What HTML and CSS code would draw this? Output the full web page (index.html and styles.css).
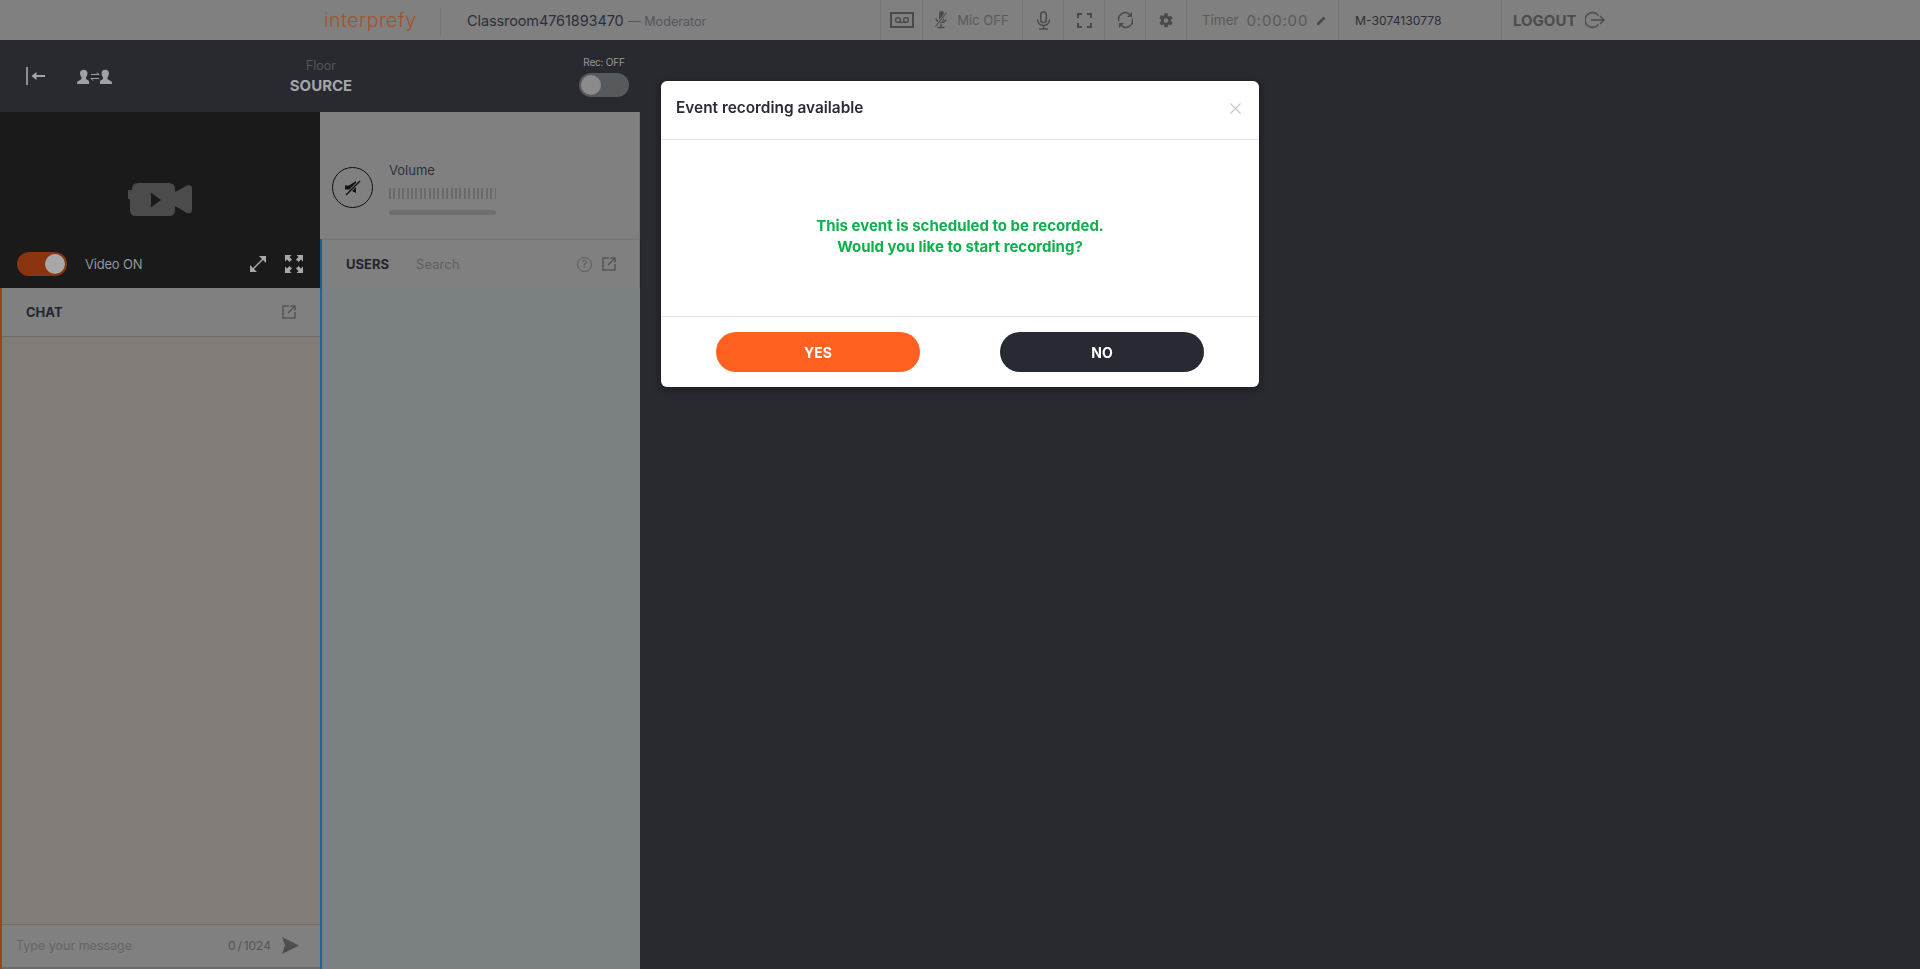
FILE: index.html
```html
<!DOCTYPE html>
<html lang="en">
<head>
    <meta charset="UTF-8">
    <meta name="viewport" content="width=device-width, initial-scale=1.0">
    <title>Interprefy</title>
    <link rel="stylesheet" href="styles.css">
</head>
<body>
    <header class="topbar">
        <div class="logo">interprefy</div>
        <div class="room"><span class="room-name">Classroom4761893470</span> <span class="room-role">— Moderator</span></div>
        <div class="cell cell-tape">
            <svg width="24" height="16" viewBox="0 0 24 16"><rect x="1" y="1" width="22" height="14" fill="none" stroke="#4a4a4a" stroke-width="2"/><circle cx="8" cy="8" r="2.4" fill="none" stroke="#4a4a4a" stroke-width="1.4"/><circle cx="16" cy="8" r="2.4" fill="none" stroke="#4a4a4a" stroke-width="1.4"/><path d="M8 10.4h8" stroke="#4a4a4a" stroke-width="1.4"/></svg>
        </div>
        <div class="cell cell-micoff">
            <svg width="14" height="18" viewBox="0 0 14 18"><path d="M5 2.5a2.5 2.5 0 0 1 5 0v5a2.5 2.5 0 0 1-5 0z" fill="#4a4a4a"/><path d="M2 7.5a5.300 5.300 0 0 0 10 1M7 13v3M3.500 16.500h7" fill="none" stroke="#4a4a4a" stroke-width="1.4"/><path d="M12.500 1.500 1.500 15.500" stroke="#808080" stroke-width="2.600"/><path d="M12.500 1.500 1.500 15.500" stroke="#4a4a4a" stroke-width="1.100"/></svg>
            <span class="mic-label">Mic OFF</span>
        </div>
        <div class="cell cell-icon">
            <svg width="15" height="19" viewBox="0 0 15 19"><rect x="4.700" y="1" width="5.600" height="10.500" rx="2.800" fill="none" stroke="#4a4a4a" stroke-width="1.500"/><path d="M1.500 8.500a6 6 0 0 0 12 0M7.500 14.500v3M3 18h9" fill="none" stroke="#4a4a4a" stroke-width="1.500"/></svg>
        </div>
        <div class="cell cell-icon">
            <svg width="15" height="15" viewBox="0 0 15 15"><path d="M1 5V1h4M10 1h4v4M14 10v4h-4M5 14H1v-4" fill="none" stroke="#4a4a4a" stroke-width="2"/></svg>
        </div>
        <div class="cell cell-icon">
            <svg width="17" height="18" viewBox="0 0 17 18"><path d="M2 10.500A6.500 6.500 0 0 1 13 4l1.500 1.500M15 7.500A6.500 6.500 0 0 1 4 14l-1.500-1.500" fill="none" stroke="#4a4a4a" stroke-width="1.400"/><path d="M15 1v5h-5zM2 17v-5h5z" fill="#4a4a4a"/></svg>
        </div>
        <div class="cell cell-icon">
            <svg width="16" height="17" viewBox="0 0 24 24"><path fill="#4a4a4a" d="M19.400 13a7.500 7.500 0 0 0 0-2l2.500-1.900-2.400-4.200-3 1.200a7.500 7.500 0 0 0-1.700-1L14.400 1h-4.800l-.4 3.100a7.500 7.500 0 0 0-1.700 1l-3-1.200-2.400 4.200L4.600 11a7.500 7.500 0 0 0 0 2l-2.500 1.900 2.400 4.200 3-1.200a7.500 7.500 0 0 0 1.700 1l.4 3.100h4.800l.4-3.100a7.500 7.500 0 0 0 1.700-1l3 1.200 2.400-4.200zM12 15.500a3.500 3.500 0 1 1 0-7 3.500 3.500 0 0 1 0 7z"/></svg>
        </div>
        <div class="cell cell-timer">
            <span class="timer-label">Timer</span>
            <span class="timer-value">0:00:00</span>
            <svg width="11" height="11" viewBox="0 0 11 11"><path d="M1 10V8l6.500-6.500 2 2L3 10z" fill="#4a4a4a"/></svg>
        </div>
        <div class="cell cell-code">M-3074130778</div>
        <div class="cell cell-logout">
            <span class="logout-label">LOGOUT</span>
            <svg width="20" height="18" viewBox="0 0 20 18"><path d="M13.500 4.500A7.500 7.500 0 1 0 13.500 13.500" fill="none" stroke="#4a4a4a" stroke-width="1.400"/><path d="M6 9h13M15 5l4 4-4 4" fill="none" stroke="#4a4a4a" stroke-width="1.400"/></svg>
        </div>
    </header>

    <main class="workspace">
        <section class="side">
            <div class="floorbar">
                <div class="floor-left">
                    <svg width="20" height="18" viewBox="0 0 20 18"><path d="M1 0v18" stroke="#8f8f8f" stroke-width="2"/><path d="M7 9h12" stroke="#a5a5a5" stroke-width="2"/><path d="M10.500 5 5.500 9l5 4z" fill="#a5a5a5"/></svg>
                    <svg width="35" height="15" viewBox="0 0 35 15"><path fill="#a0a0a0" d="M3 4a3.800 3.800 0 0 1 7.500 0c0 2-1 3.500-1.500 4.500v1.500l3 2v3H0v-2l4.500-3V8.500C4 7.500 3 6 3 4zM24.500 4a3.800 3.800 0 0 1 7.500 0c0 2-1 3.500-1.500 4.500v1.500l4.500 3v2H23v-3l3-2V8.500C25.500 7.500 24.500 6 24.500 4z"/><path d="M14 5.500h8M20 3.500l2 2M22 9.500h-8M16 11.500l-2-2" stroke="#a0a0a0" stroke-width="1" fill="none"/></svg>
                </div>
                <div class="floor-title">
                    <div class="floor-label">Floor</div>
                    <div class="floor-source">SOURCE</div>
                </div>
                <div class="rec">
                    <div class="rec-label">Rec: OFF</div>
                    <div class="switch switch-off"><span class="knob"></span></div>
                </div>
            </div>
            <div class="columns">
                <div class="col">
                    <div class="video">
                        <div class="video-stage">
                            <svg width="66" height="33" viewBox="0 0 66 33"><path fill="#4b4b4b" d="M5 6q0-6 6-6h31q6 0 6 6v3l12-6.500q5-1 5 3V27q0 4-5 3l-12-7v4q0 6-6 6H9q-6 0-6-6V16H1V7h4z"/><path fill="#1a1a1a" d="M24 9.500v15l10-7.500z"/></svg>
                        </div>
                        <div class="video-controls">
                            <div class="switch switch-on"><span class="knob"></span></div>
                            <span class="video-label">Video ON</span>
                            <div class="video-icons">
                                <svg width="18" height="18" viewBox="0 0 18 18"><path d="M4 14 14 4" stroke="#a8a8a8" stroke-width="1.500"/><path d="M10 1h7v7zM1 10v7h7z" fill="#a8a8a8"/></svg>
                                <svg width="18" height="18" viewBox="0 0 18 18"><path fill="#a8a8a8" d="M0 0h6.500L4.500 2 7 4.500 4.500 7 2 4.500 0 6.500zM18 0v6.500l-2-2L13.500 7 11 4.500 13.500 2l-2-2zM0 18v-6.500l2 2L4.500 11 7 13.500 4.500 16l2 2zM18 18h-6.500l2-2-2.500-2.500 2.500-2.500 2.500 2.500 2-2z"/></svg>
                            </div>
                        </div>
                    </div>
                    <div class="chat">
                        <div class="panel-head chat-head">
                            <span class="panel-title">CHAT</span>
                            <svg class="ext-icon" width="14" height="14" viewBox="0 0 14 14"><path d="M7 1H1v12h12V7M6 8l7-7M8.500 1H13v4.500" fill="none" stroke="#555" stroke-width="1.500"/></svg>
                        </div>
                        <div class="chat-log"></div>
                        <div class="chat-input">
                            <span class="chat-placeholder">Type your message</span>
                            <span class="chat-count">0 / 1024</span>
                            <svg width="17" height="17" viewBox="0 0 17 17"><path d="M0 0l17 8.500L0 17l3-8.500z" fill="#4e4e4e"/></svg>
                        </div>
                    </div>
                </div>
                <div class="col">
                    <div class="volume">
                        <div class="mute">
                            <svg width="18" height="18" viewBox="0 0 18 18"><path d="M1 6.500h4L12 2v12L5 10.500H1z" fill="#111"/><path d="M16 2 2 16" stroke="#808080" stroke-width="3"/><path d="M16 2 2 16" stroke="#111" stroke-width="1.500"/></svg>
                        </div>
                        <div class="volume-info">
                            <div class="volume-label">Volume</div>
                            <div class="volume-ticks"></div>
                            <div class="volume-bar"></div>
                        </div>
                    </div>
                    <div class="users">
                        <div class="panel-head users-head">
                            <span class="panel-title">USERS</span>
                            <span class="users-search">Search</span>
                            <span class="help">?</span>
                            <svg class="ext-icon" width="14" height="14" viewBox="0 0 14 14"><path d="M7 1H1v12h12V7M6 8l7-7M8.500 1H13v4.500" fill="none" stroke="#555" stroke-width="1.500"/></svg>
                        </div>
                        <div class="users-list"></div>
                    </div>
                </div>
            </div>
        </section>
    </main>

    <div class="modal-layer">
        <div class="modal">
            <div class="modal-head">
                <span class="modal-title">Event recording available</span>
                <svg class="modal-close" width="11" height="11" viewBox="0 0 11 11"><path d="M.5.500l10 10M10.500.500l-10 10" stroke="#c6c6c6" stroke-width="1.100"/></svg>
            </div>
            <div class="modal-body">
                <p>This event is scheduled to be recorded.</p>
                <p>Would you like to start recording?</p>
            </div>
            <div class="modal-foot">
                <button class="btn btn-yes">YES</button>
                <button class="btn btn-no">NO</button>
            </div>
        </div>
    </div>
</body>
</html>
```

FILE: styles.css
```css
* {
    box-sizing: border-box;
}
html, body {
    height: 100%;
}
body {
    margin: 0;
    display: flex;
    flex-direction: column;
    height: 969px;
    overflow: hidden;
    background: #292a30;
    font-family: "Inter", "Liberation Sans", sans-serif;
    color: #2c2e3a;
}

/* top bar */
.topbar {
    height: 40px;
    flex: none;
    display: flex;
    align-items: stretch;
    background: #808080;
    padding-left: 324px;
}
.logo {
    width: 117px;
    border-right: 1px solid #757575;
    margin: 8px 0 4px;
    color: #a5532c;
    font-size: 19.500px;
    font-weight: 300;
    line-height: 24px;
    letter-spacing: 0.5px;
}
.room {
    width: 439px;
    padding-left: 26px;
    line-height: 40px;
    white-space: nowrap;
}
.room-name {
    font-size: 14.500px;
    letter-spacing: -0.1px;
    color: #2c2e3a;
}
.room-role {
    font-size: 12.600px;
    color: #55565f;
}
.cell {
    display: flex;
    align-items: center;
    justify-content: center;
    border-left: 1px solid #757575;
    white-space: nowrap;
}
.cell-tape {
    width: 42px;
}
.cell-micoff {
    width: 100px;
    gap: 9px;
    padding-right: 2px;
    color: #5a5a5a;
}
.mic-label {
    font-size: 13px;
}
.cell-icon {
    width: 41px;
}
.cell-timer {
    width: 152px;
    gap: 8px;
    padding-left: 4px;
    color: #5a5a5a;
}
.timer-label {
    font-size: 13.500px;
}
.timer-value {
    font-size: 15px;
    letter-spacing: 0.8px;
}
.cell-code {
    width: 163px;
    justify-content: flex-start;
    padding-left: 16px;
    font-size: 12.200px;
    color: #2c2e3a;
}
.cell-logout {
    width: 128px;
    justify-content: flex-start;
    padding-left: 11px;
    gap: 9px;
}
.logout-label {
    font-size: 15px;
    font-weight: 700;
    color: #4c4c4c;
}

/* main area */
.workspace {
    flex: 1;
    min-height: 0;
    display: flex;
}
.side {
    width: 640px;
    display: flex;
    flex-direction: column;
}
.floorbar {
    height: 72px;
    flex: none;
    display: flex;
    align-items: center;
    padding: 0 11px 0 26px;
    background: #292a30;
}
.floor-left {
    width: 203px;
    display: flex;
    align-items: center;
    gap: 31px;
}
.floor-title {
    width: 184px;
    padding-top: 2px;
    text-align: center;
}
.floor-label {
    font-size: 12.500px;
    line-height: 15px;
    color: #55565c;
}
.floor-source {
    margin-top: 2px;
    font-size: 15px;
    line-height: 22px;
    font-weight: 700;
    color: #a3a6aa;
}
.rec {
    margin-left: auto;
    display: flex;
    flex-direction: column;
    align-items: center;
    gap: 4px;
}
.rec-label {
    font-size: 10px;
    line-height: 13px;
    color: #9a9a9a;
    letter-spacing: -0.2px;
}
.switch {
    width: 50px;
    height: 24px;
    border-radius: 12px;
    display: flex;
    align-items: center;
    padding: 0 2px;
}
.knob {
    width: 20px;
    height: 20px;
    border-radius: 50%;
}
.switch-off {
    background: #565a5d;
}
.switch-off .knob {
    background: #8b8b8b;
}
.switch-on {
    background: #8a3510;
    justify-content: flex-end;
}
.switch-on .knob {
    background: #a8a8a8;
}
.columns {
    flex: 1;
    min-height: 0;
    display: grid;
    grid-template-columns: 320px 320px;
}
.col {
    display: flex;
    flex-direction: column;
    min-height: 0;
}

/* video */
.video {
    height: 176px;
    flex: none;
    background: #1a1a1a;
    display: flex;
    flex-direction: column;
}
.video-stage {
    flex: 1;
    display: flex;
    align-items: flex-start;
    justify-content: center;
    padding-top: 71px;
}
.video-controls {
    height: 48px;
    flex: none;
    display: flex;
    align-items: center;
    padding: 0 17px;
}
.video-label {
    margin-left: 18px;
    font-size: 13px;
    letter-spacing: -0.2px;
    color: #92979c;
}
.video-icons {
    margin-left: auto;
    display: flex;
    gap: 18px;
}

/* chat */
.chat {
    flex: 1;
    min-height: 0;
    display: flex;
    flex-direction: column;
    border-left: 2px solid #a0421a;
    background: #808080;
}
.panel-head {
    flex: none;
    display: flex;
    align-items: center;
}
.panel-title {
    font-size: 13px;
    font-weight: 700;
    color: #23252f;
}
.chat-head {
    height: 49px;
    padding: 0 24px;
    justify-content: space-between;
    border-bottom: 1px solid #6c6c6c;
}
.chat-log {
    flex: 1;
    background: #827c78;
}
.chat-input {
    height: 45px;
    flex: none;
    display: flex;
    align-items: center;
    padding: 0 21px 2px 14px;
    border-top: 1px solid #6f6f6f;
    border-bottom: 2px solid #6c6c6c;
}
.chat-placeholder {
    font-size: 12.500px;
    color: #656565;
}
.chat-count {
    margin-left: auto;
    margin-right: 11px;
    font-size: 12px;
    word-spacing: -1.500px;
    color: #555;
}

/* volume + users */
.volume {
    height: 127px;
    flex: none;
    background: #808080;
    display: flex;
    align-items: flex-start;
    padding: 55px 0 0 12px;
    border-right: 1px solid #747474;
}
.mute {
    width: 41px;
    height: 41px;
    border: 1.500px solid #111;
    border-radius: 50%;
    display: flex;
    align-items: center;
    justify-content: center;
}
.volume-info {
    margin-left: 16px;
    margin-top: -5px;
}
.volume-label {
    font-size: 13px;
    line-height: 16px;
    color: #2e3044;
}
.volume-ticks {
    width: 107px;
    height: 11px;
    margin-top: 10px;
    background: repeating-linear-gradient(90deg, #6a6a6a 0, #6a6a6a 2px, transparent 2px, transparent 4.400px);
}
.volume-bar {
    width: 107px;
    height: 5px;
    margin-top: 11px;
    border-radius: 3px;
    background: #6e6e6e;
}
.users {
    flex: 1;
    min-height: 0;
    display: flex;
    flex-direction: column;
    border-left: 2px solid #1c6597;
}
.users-head {
    height: 49px;
    padding: 0 23px 0 24px;
    background: #808080;
    border-top: 1px solid #757575;
    border-right: 1px solid #747474;
    box-shadow: 0 1px 2px rgba(0, 0, 0, 0.35);
}
.users-search {
    margin-left: 27px;
    font-size: 12.800px;
    color: #5f5f5f;
    letter-spacing: 0.2px;
}
.help {
    margin-left: auto;
    margin-right: 10px;
    width: 15px;
    height: 15px;
    border: 1px solid #5a5a5a;
    border-radius: 50%;
    text-align: center;
    font-size: 11px;
    line-height: 13px;
    color: #5a5a5a;
}
.users-list {
    flex: 1;
    background: #7b8083;
}

/* dialog */
.modal-layer {
    position: fixed;
    top: 0;
    left: 0;
    right: 0;
    display: flex;
    justify-content: center;
    padding-top: 81px;
}
.modal {
    width: 598px;
    height: 306px;
    background: #fff;
    border-radius: 6px;
    box-shadow: 0 2px 8px rgba(0, 0, 0, 0.4);
    display: flex;
    flex-direction: column;
}
.modal-head {
    height: 59px;
    flex: none;
    display: flex;
    align-items: center;
    justify-content: space-between;
    padding: 0 18px 0 15px;
    border-bottom: 1px solid #e4e4e4;
}
.modal-title {
    font-size: 15.400px;
    font-weight: 600;
    color: #2a2c35;
    margin-top: -6px;
}
.modal-close {
    margin-top: -4px;
}
.modal-body {
    flex: 1;
    display: flex;
    flex-direction: column;
    justify-content: center;
    align-items: center;
    padding-top: 16px;
    color: #0cb14b;
    font-size: 15px;
    font-weight: 700;
    line-height: 21px;
}
.modal-body p {
    margin: 0;
}
.modal-foot {
    height: 71px;
    flex: none;
    display: flex;
    align-items: flex-start;
    justify-content: space-between;
    padding: 15px 55px 0;
    border-top: 1px solid #e4e4e4;
}
.btn {
    width: 204px;
    height: 40px;
    border: 0;
    border-radius: 20px;
    font-family: inherit;
    font-size: 14px;
    font-weight: 700;
    color: #fff;
}
.btn-yes {
    background: #ff6121;
}
.btn-no {
    background: #272a33;
}
```
